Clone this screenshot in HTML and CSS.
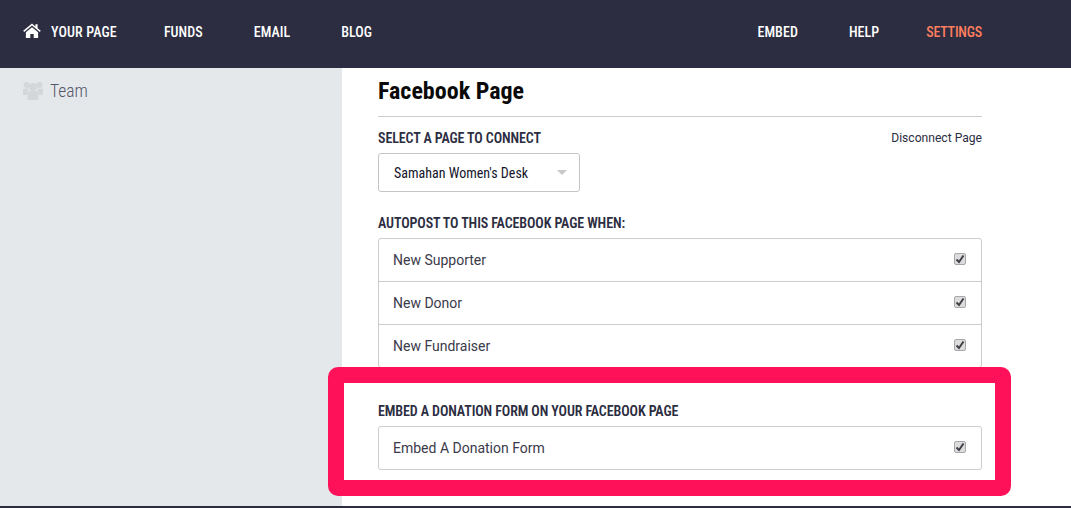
FILE: index.html
```html
<!DOCTYPE html>
<html lang="en">
<head>
  <meta charset="UTF-8" />
  <title>Facebook Page</title>
  <link rel="stylesheet" href="styles.css">
</head>
<body>
  <header class="topbar">
    <nav class="nav-left">
      <a class="nav-link nav-home" href="#">
        <svg class="icon-home" viewBox="0 0 18 15" width="18" height="15"><path fill="#fff" d="M9 0.6 0.2 7.8l1 1.2L9 2.6l7.8 6.4 1-1.2-3.2-2.6V1.2h-2.2v2.3zM2.9 9.2V15h4.4v-4h3.4v4h4.4V9.2L9 4.2z"/></svg>
        YOUR PAGE
      </a>
      <a class="nav-link" href="#">FUNDS</a>
      <a class="nav-link" href="#">EMAIL</a>
      <a class="nav-link" href="#">BLOG</a>
    </nav>
    <nav class="nav-right">
      <a class="nav-link" href="#">EMBED</a>
      <a class="nav-link" href="#">HELP</a>
      <a class="nav-link active" href="#">SETTINGS</a>
    </nav>
  </header>

  <div class="layout">
    <aside class="sidebar">
      <a class="side-link" href="#">
        <svg class="icon-team" viewBox="0 0 20 18" width="20" height="18"><g fill="#d3d7da"><circle cx="3.6" cy="3" r="3"/><circle cx="16.4" cy="3" r="3"/><circle cx="10" cy="5" r="4"/><path d="M0 8q0-1.500 1.500-1.500h4L4 13H0zM20 8q0-1.500-1.500-1.500h-4L16 13h4z"/><path d="M4.500 11q0-2 2-2h7q2 0 2 2v5.500q0 1.500-1.500 1.500H6q-1.500 0-1.500-1.500z"/></g></svg>
        Team
      </a>
    </aside>

    <main class="content">
      <h1 class="page-title">Facebook Page</h1>

      <div class="connect-head">
        <label class="field-label">SELECT A PAGE TO CONNECT</label>
        <a class="disconnect" href="#">Disconnect Page</a>
      </div>
      <div class="select-box">
        <span>Samahan Women's Desk</span>
        <i class="caret"></i>
      </div>

      <label class="field-label autopost-label">AUTOPOST TO THIS FACEBOOK PAGE WHEN:</label>
      <ul class="check-list">
        <li class="check-row">New Supporter <input type="checkbox" checked></li>
        <li class="check-row">New Donor <input type="checkbox" checked></li>
        <li class="check-row">New Fundraiser <input type="checkbox" checked></li>
      </ul>

      <section class="highlight">
        <label class="field-label">EMBED A DONATION FORM ON YOUR FACEBOOK PAGE</label>
        <ul class="check-list">
          <li class="check-row">Embed A Donation Form <input type="checkbox" checked></li>
        </ul>
      </section>
    </main>
  </div>

  <div class="bottom-line"></div>
</body>
</html>
```

FILE: styles.css
```css
* {
  box-sizing: border-box;
}

html, body {
  height: 508px;
  overflow: hidden;
}

body {
  margin: 0;
  display: flex;
  flex-direction: column;
  font-family: 'Roboto', sans-serif;
  color: #2c2d41;
  background-color: #fff;
}

a {
  text-decoration: none;
}

.topbar {
  height: 68px;
  flex: none;
  display: flex;
  justify-content: space-between;
  align-items: center;
  padding: 0 89px 4px 23px;
  background-color: #2c2d41;
}

.nav-left, .nav-right {
  display: flex;
  align-items: center;
  gap: 51px;
}

.nav-link {
  color: #fff;
  font-size: 14px;
  font-weight: 500;
  font-stretch: 75%;
  letter-spacing: .05px;
  display: flex;
  align-items: center;
}

.nav-home {
  margin-right: -4px;
  letter-spacing: .15px;
}

.nav-link.active {
  margin-left: -4px;
  color: #ff7f5f;
  letter-spacing: -.2px;
}

.icon-home {
  margin: -4px 10px 0 0;
}

.layout {
  flex: 1;
  display: flex;
  min-height: 0;
}

.sidebar {
  width: 342px;
  flex: none;
  padding: 13px 23px;
  background-color: #e4e8eb;
}

.side-link {
  display: flex;
  align-items: center;
  gap: 7px;
  color: #55566a;
  font-size: 17.5px;
  font-weight: 300;
  font-stretch: 75%;
  line-height: 20px;
}

.content {
  width: 604px;
  margin-left: 36px;
}

.page-title {
  margin: 0;
  height: 49px;
  padding-top: 9px;
  color: #0a0a0a;
  font-size: 24px;
  line-height: 28px;
  font-weight: 700;
  font-stretch: 75%;
  border-bottom: 1px solid #ccc;
}

.connect-head {
  display: flex;
  justify-content: space-between;
  align-items: center;
  margin-top: 13px;
  height: 16px;
}

.field-label {
  display: block;
  font-size: 14px;
  line-height: 16px;
  font-weight: 600;
  font-stretch: 75%;
  letter-spacing: -.1px;
  color: #2c2d41;
}

.disconnect {
  color: #2c2d41;
  font-size: 12.1px;
}

.select-box {
  width: 202px;
  height: 39px;
  margin-top: 7px;
  padding: 0 12px 0 15px;
  display: flex;
  justify-content: space-between;
  align-items: center;
  font-size: 14px;
  font-stretch: 75%;
  color: #14142b;
  border: 1px solid #c4c4c4;
  border-radius: 3px;
}

.caret {
  width: 0;
  height: 0;
  border-left: 5px solid transparent;
  border-right: 5px solid transparent;
  border-top: 5px solid #c8c8c8;
}

.autopost-label {
  margin-top: 23px;
}

.check-list {
  list-style: none;
  margin: 7px 0 0;
  padding: 0;
  border: 1px solid #ccc;
  border-radius: 3px;
}

.check-row {
  height: 43px;
  padding: 0 14px;
  display: flex;
  justify-content: space-between;
  align-items: center;
  font-size: 14px;
  color: #3a3a4a;
  border-top: 1px solid #ccc;
}

.check-row:first-child {
  height: 42px;
  border-top: 0;
}

.check-row input {
  appearance: none;
  width: 12px;
  height: 12px;
  margin: 0 1px 2px 0;
  background: #dcdcdc url("data:image/svg+xml,%3Csvg xmlns='http://www.w3.org/2000/svg' viewBox='0 0 10 10'%3E%3Cpath fill='none' stroke='%23404048' stroke-width='2' d='M1.500 5.500 4 8l4.500-6.500'/%3E%3C/svg%3E") center / 10px 10px no-repeat;
  border: 1px solid #a8a8a8;
  border-radius: 2px;
}

/* red box drawn over the end of the list */
.highlight {
  position: relative;
  height: 129px;
  margin: -1px -29px 0 -50px;
  padding: 20px 13px 0 34px;
  background-color: #fff;
  border: 16px solid #ff115a;
  border-radius: 10px;
}

.bottom-line {
  height: 2px;
  flex: none;
  background-color: #2c2d41;
}
```
